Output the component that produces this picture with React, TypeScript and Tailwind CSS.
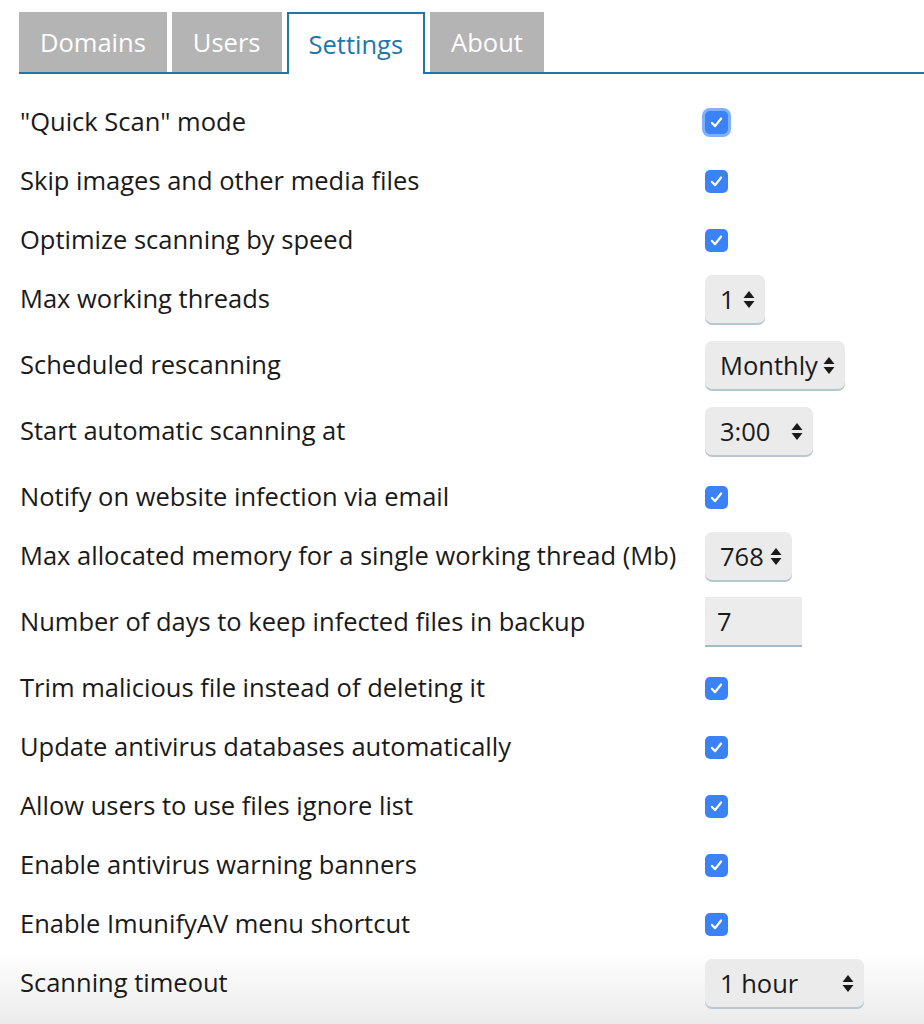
import type { ReactNode } from "react";

type Row =
  | { label: string; kind: "check"; focus?: boolean }
  | { label: string; kind: "select"; value: string; width: string }
  | { label: string; kind: "input"; value: string };

const ROWS: Row[] = [
  { label: '"Quick Scan" mode', kind: "check", focus: true },
  { label: "Skip images and other media files", kind: "check" },
  { label: "Optimize scanning by speed", kind: "check" },
  { label: "Max working threads", kind: "select", value: "1", width: "w-[60px]" },
  { label: "Scheduled rescanning", kind: "select", value: "Monthly", width: "w-[140px]" },
  { label: "Start automatic scanning at", kind: "select", value: "3:00", width: "w-[108px]" },
  { label: "Notify on website infection via email", kind: "check" },
  { label: "Max allocated memory for a single working thread (Mb)", kind: "select", value: "768", width: "w-[87px]" },
  { label: "Number of days to keep infected files in backup", kind: "input", value: "7" },
  { label: "Trim malicious file instead of deleting it", kind: "check" },
  { label: "Update antivirus databases automatically", kind: "check" },
  { label: "Allow users to use files ignore list", kind: "check" },
  { label: "Enable antivirus warning banners", kind: "check" },
  { label: "Enable ImunifyAV menu shortcut", kind: "check" },
  { label: "Scanning timeout", kind: "select", value: "1 hour", width: "w-[159px]" },
];

const TABS = ["Domains", "Users", "Settings", "About"];

function Arrows() {
  return (
    <svg width="12" height="19" viewBox="0 0 12 19" className="shrink-0">
      <path d="M6 1 L11.5 8 L0.5 8 Z" fill="#1a1a1a" />
      <path d="M6 18 L11.5 11 L0.5 11 Z" fill="#1a1a1a" />
    </svg>
  );
}

function Checkbox({ focus }: { focus?: boolean }) {
  return (
    <span
      className={
        "flex h-[23px] w-[23px] items-center justify-center rounded-[5px] bg-[#3b82f7] " +
        (focus ? "ring-[3px] ring-[#7fb0fa]" : "")
      }
    >
      <svg width="15" height="15" viewBox="0 0 14 14">
        <path
          d="M2.8 7.4 L5.7 10.4 L11.3 3.3"
          fill="none"
          stroke="#fff"
          strokeWidth="2.1"
          strokeLinecap="round"
          strokeLinejoin="round"
        />
      </svg>
    </span>
  );
}

function Control({ row }: { row: Row }): ReactNode {
  if (row.kind === "check") return <Checkbox focus={row.focus} />;
  if (row.kind === "input")
    return (
      <div className="flex h-[50px] w-[97px] items-center border-b-2 border-[#a9b9c4] bg-[#ececec] pl-[12px] text-[25.5px] text-[#1a1a1a]">
        {row.value}
      </div>
    );
  return (
    <div
      className={
        "flex h-12 items-center justify-between rounded-[7px] bg-[#ebebeb] pl-[15px] pr-[10px] text-[25.5px] text-[#1a1a1a] shadow-[0_2px_0_#b8c6d0] " +
        row.width
      }
    >
      <span>{row.value}</span>
      <Arrows />
    </div>
  );
}

export default function App() {
  return (
    <div className="min-h-[1024px] bg-[linear-gradient(to_bottom,#ffffff_0%,#ffffff_93%,#ebebeb_100%)] font-['Open_Sans',sans-serif] text-[#1a1a1a]">
      <div className="ml-[19px] flex items-end border-b-2 border-[#1b78a8] pt-[12px]">
        {TABS.map((t) => {
          const active = t === "Settings";
          return (
            <div
              key={t}
              className={
                active
                  ? "-mb-[2px] mr-[5px] flex h-[62px] items-center border-2 border-b-0 border-[#1b78a8] bg-white px-[20px] text-[25.5px] text-[#1b78a8]"
                  : "mr-[5px] flex h-[60px] items-center bg-[#b4b4b4] px-[21px] text-[25.5px] text-white"
              }
            >
              {t}
            </div>
          );
        })}
      </div>

      <div className="flex flex-col gap-[11px] pl-[20px] pt-[24px]">
        {ROWS.map((r) => (
          <div
            key={r.label}
            className={
              "flex h-12 items-center " + (r.kind === "check" ? "" : "mb-[7px]")
            }
          >
            <div className="w-[685px] text-[25.5px] leading-none">{r.label}</div>
            <Control row={r} />
          </div>
        ))}
      </div>
    </div>
  );
}
